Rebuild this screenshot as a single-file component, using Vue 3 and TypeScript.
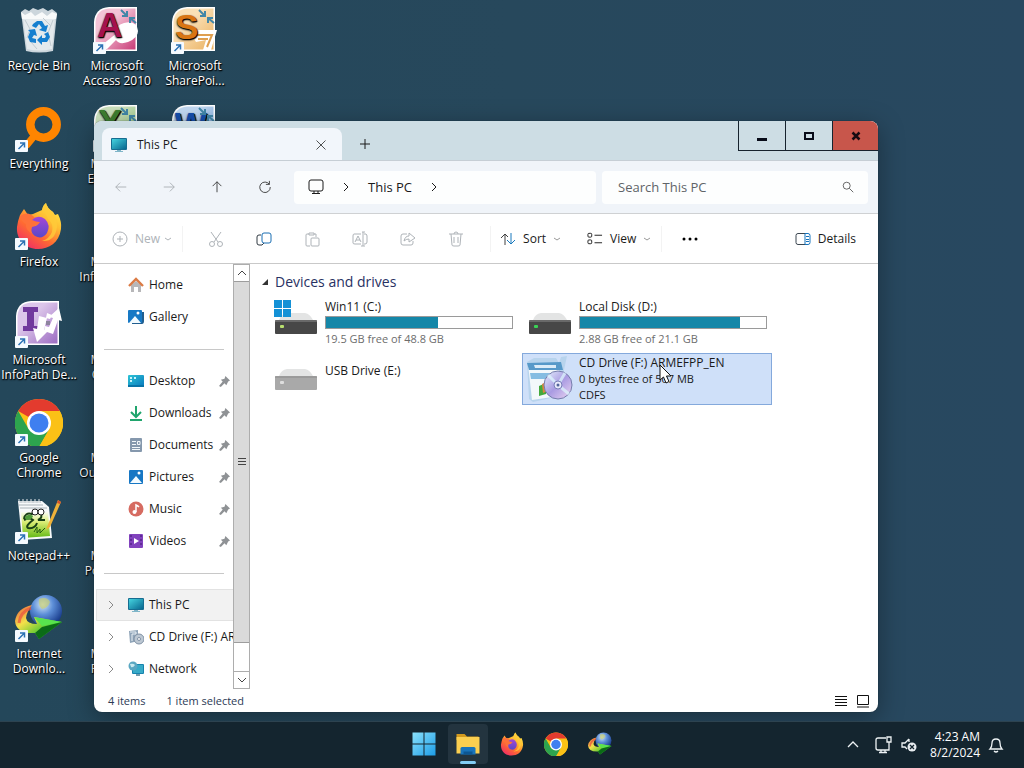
<script setup lang="ts">
import { ref } from 'vue'

interface Shortcut {
  label: string
  art: string
  linked: boolean
}

interface Place {
  label: string
  art: string
  pinned?: boolean
  expandable?: boolean
  current?: boolean
}

interface Drive {
  name: string
  art: string
  lines: string[]
  used?: number
  selected?: boolean
}

const query = ref('')

const office = (light: string, mid: string, edge: string) =>
  `<defs><linearGradient id="o${light.slice(1)}" x1="0" y1="0" x2="1" y2="1"><stop offset=".35" stop-color="${light}"/><stop offset="1" stop-color="${mid}"/></linearGradient></defs><path d="M1 16Q2 2 16 1H44V45H1Z" fill="${edge}"/><path d="M2.500 16Q3.500 3.500 16 2.500H42.500V43.500H2.500Z" fill="url(#o${light.slice(1)})"/>`
const pinch = `<g stroke="#4287a8" stroke-width="2" fill="none"><path d="M28 4L34 10M34 5V10H29M43 17L37 12M37 17V12H42"/></g>`

const monitor = `<defs><linearGradient id="mon" x1="0" y1="0" x2="1" y2="1"><stop offset="0" stop-color="#45d3df"/><stop offset="1" stop-color="#08678f"/></linearGradient></defs><rect x="0" y="1" width="16" height="12" rx="1" fill="#176d91"/><rect x="1" y="2" width="14" height="10" fill="url(#mon)"/><path d="M6 13H10V14H12V15H4V14H6Z" fill="#7fb5c8"/>`

const firefox = `<defs><linearGradient id="ffa" x1=".9" y1="0" x2=".2" y2="1"><stop offset="0" stop-color="#fff04a"/><stop offset=".35" stop-color="#ffbd32"/><stop offset=".65" stop-color="#ff6a32"/><stop offset="1" stop-color="#f02a68"/></linearGradient><linearGradient id="ffb" x1="0" y1="0" x2="0" y2="1"><stop offset="0" stop-color="#a447d6"/><stop offset="1" stop-color="#5948c9"/></linearGradient></defs><path d="M5 13L9 7L13 13L18 12L27 8Q28 3 31 1Q32 6 38 10L40 13L43 12Q47 20 46 27C44 41 34 47 23 47C10 47 1 37 2 25Q3 18 5 13Z" fill="url(#ffa)"/><path d="M5 14Q13 8 20 16L27 18Q25 23 20 23Q18 29 23 34Q10 30 11 22Q7 20 5 14Z" fill="#ff7139"/><path d="M17 18Q23 12 30 17Q36 23 32 31Q27 38 20 34Q15 31 17 25Q23 24 25 20Q21 20 17 18Z" fill="url(#ffb)"/><path d="M27 8Q31 11 33 17Q39 22 37 30Q34 37 27 39Q40 40 42 25Q42 16 38 10Q32 6 31 1Q28 3 27 8Z" fill="#ffca3a" opacity=".8"/>`
const chrome = `<circle cx="24" cy="25" r="24" fill="#fbc116"/><path d="M24 25L3.200 13A24 24 0 0 1 44.800 13Z" fill="#e33b2e"/><path d="M3.200 13A24 24 0 0 0 24 49L34.400 31H24L13.600 31Z" fill="#2da44e"/><path d="M24 13H44.800A24 24 0 0 1 24 49L34.400 31Z" fill="#fbc116"/><circle cx="24" cy="25" r="12" fill="#fff"/><circle cx="24" cy="25" r="9.500" fill="#3f7ff0"/>`
const idm = `<defs><radialGradient id="globe" cx=".4" cy=".3" r=".7"><stop offset="0" stop-color="#d5e7f5"/><stop offset=".45" stop-color="#5d8fd8"/><stop offset="1" stop-color="#173a8a"/></radialGradient><linearGradient id="rain" x1="0" y1="0" x2="1" y2="1"><stop offset="0" stop-color="#e9523c"/><stop offset=".35" stop-color="#f4e04a"/><stop offset=".7" stop-color="#43c62e"/><stop offset="1" stop-color="#128016"/></linearGradient></defs><circle cx="31" cy="17" r="16" fill="url(#globe)"/><path d="M24 5Q32 2 35 8Q33 14 27 15Q23 12 24 5Z" fill="#c9cf73" opacity=".7"/><path d="M17 11Q2 14 0 27Q1 40 20 39L24 45L47 28L19 23L22 30Q12 30 11 24Q12 17 17 11Z" fill="url(#rain)"/><path d="M16 14Q5 18 4 29" stroke="#e8503e" stroke-width="3" fill="none" opacity=".7"/><path d="M19 23L47 28L27 32Z" fill="#58e34e"/><path d="M20 39L27 33L47 28L24 45Z" fill="#0b6b17"/>`

const driveBox = (front: string, light: string) =>
  `<path d="M7 21Q9 15 15 14H33Q38 15 41 21Z" fill="#e3e4e4"/><rect x="3" y="21" width="42" height="14" rx="1" fill="${front}"/><path d="M3 22H45" stroke="#8c8c8c"/><rect x="8" y="26" width="4" height="3" rx="1" fill="${light}"/>`

const art: Record<string, string> = {
  bin: `<path d="M6 6L10 3L14 5L18 2L23 4L28 2L33 5L37 3L42 7L38 45Q24 48 11 45Z" fill="#ccd6dc"/><path d="M8 12H40L37 43Q24 46 12 43Z" fill="#e4eaed"/><path d="M6 6L10 9L16 6L20 10L27 6L32 10L37 6L42 8L41 13H7Z" fill="#f8fafa"/><path d="M10 14L15 23L12 32M38 14L33 27L36 40M16 36L22 43M28 12L36 20" stroke="#c1cbd1" fill="none"/><g fill="#157fcf"><path d="M18 18L22 15H27L30 20L33 19L31 26L24 24L27 22L24 18L21 22L17 20Z"/><path d="M33 26L35 31L32 36H27V39L22 34L27 29V32H30L31 30L29 28Z"/><path d="M13 24L20 23L22 30L19 29L17 32L21 33V37L15 36L13 31L15 26Z"/></g>`,
  access: office('#f4c3d6', '#c93d78', '#fff') + `<path d="M5 42L24 27Q22 19 31 17Q44 14 45 25Q45 32 35 36Q26 39 23 34L14 43Z" fill="#fff"/><text x="4" y="31" font-family="Liberation Sans" font-weight="bold" font-size="35" fill="#a4124e">A</text>` + pinch,
  sharepoint: office('#fae0b6', '#eab160', '#fff') + `<path d="M18 24H46L40 44H32L35 34L25 36Z" fill="#fff"/><path d="M25 29H41L36 41M27 33H37" stroke="#df9f4f" stroke-width="2" fill="none"/><text x="4" y="33" font-family="Liberation Sans" font-weight="bold" font-size="35" fill="#d97513">S</text>` + pinch,
  excel: office('#cce2bd', '#82ba69', '#fff') + `<text x="5" y="32" font-family="Liberation Sans" font-weight="bold" font-size="36" fill="#3f7f31">X</text>` + pinch,
  word: office('#c3daf3', '#5c91d2', '#fff') + `<text x="4" y="32" font-family="Liberation Sans" font-weight="bold" font-size="34" fill="#164fae">W</text>` + pinch,
  infopath: office('#dcc6ea', '#9c6cc2', '#fff') + `<path d="M8 7H23V12H19V26H23V31H8V26H12V12H8Z" fill="#71399d"/><path d="M24 16L32 18L29 30L33 31L22 42L18 28L22 29Z" fill="#fff"/><path d="M44 8L47 21L43 20L38 34L29 31L30 26L34 27L38 18L34 17Z" fill="#fff"/><path d="M32 13L37 15L35 19L31 18Z" fill="#fff"/><rect x="31" y="21" width="4" height="4" fill="#8d849e"/>`,
  everything: `<circle cx="28.500" cy="20.500" r="13.200" fill="none" stroke="#ff8500" stroke-width="8.500"/><path d="M20 31L11 42" stroke="#ff8500" stroke-width="7"/>`,
  firefox,
  chrome,
  idm,
  notepad: `<defs><linearGradient id="npp" x1="0" y1="0" x2="0" y2="1"><stop offset="0" stop-color="#fafcf5"/><stop offset=".4" stop-color="#d8ec72"/><stop offset="1" stop-color="#62b915"/></linearGradient></defs><path d="M3 5H27L34 11L37 42L7 44Z" fill="#f7f9fa"/><path d="M6 16H33L35 40L8 42Z" fill="url(#npp)"/><path d="M4 6H26M4 9H28M5 12H32" stroke="#a9b2b8"/><path d="M4 3V7M8 3V7M12 3V7M16 3V7M20 3V7M24 3V7" stroke="#e6eaec"/><path d="M9 23Q10 16 17 18Q20 12 26 17Q28 22 23 24H30M9 24Q15 21 18 24Q10 30 13 32Q20 33 22 27" fill="none" stroke="#193f16" stroke-width="2"/><path d="M10 21Q14 17 18 20Q17 24 11 24Z" fill="#4f9c3a"/><circle cx="20" cy="16" r="3" fill="#fff" stroke="#222"/><circle cx="26" cy="16" r="3" fill="#fff" stroke="#222"/><path d="M19 36L22 31L22 37L25 33V37L30 32" fill="none" stroke="#245d10"/><path d="M32 31L43 4L46 6L35 31L31 34Z" fill="#eeb23a"/><path d="M43 4L46 6L45 8L42 7Z" fill="#d3542e"/>`,
  none: '',
  monitor,
  home: `<path d="M3 8V15H6V10H10V15H13V8L8 4Z" fill="#b7b7b9"/><path d="M1 9L8 2L15 9" fill="none" stroke="#db7b45" stroke-width="2.400"/>`,
  gallery: `<path d="M4 15H14Q16 15 16 12V3H14V13H4Z" fill="#215e8f"/><rect x="0" y="1" width="14" height="13" rx="1" fill="#1779c5"/><path d="M1 14L7 7L13 14Z" fill="#f3fbff"/><circle cx="10" cy="4" r="1.500" fill="#fff"/>`,
  desktop: `<defs><linearGradient id="desk" x1="0" y1="0" x2="1" y2="1"><stop offset="0" stop-color="#2dc5d6"/><stop offset="1" stop-color="#0877bd"/></linearGradient></defs><rect x="0" y="2" width="16" height="12" rx="1" fill="url(#desk)"/><path d="M2 5H4M2 8H4M6 5H8" stroke="#c9f4fb" stroke-width="2"/><path d="M0 13H16" stroke="#0873a7" stroke-width="2"/>`,
  downloads: `<path d="M8 1V11M3 7L8 12L13 7M2 15H14" fill="none" stroke="#20a56d" stroke-width="2"/>`,
  documents: `<rect x="2" y="1" width="12" height="14" rx="1" fill="#8598ad"/><path d="M4 4.500H8M4 7.500H8M4 10.500H12M4 12.500H12M9.500 4.500H12V7.500H9.500Z" stroke="#f2f7fa" fill="none"/>`,
  pictures: `<rect x="1" y="1" width="14" height="14" rx="1" fill="#1777c4"/><path d="M2 14L8 7L14 14Z" fill="#f4fbff"/><circle cx="11" cy="4" r="1.500" fill="#fff"/>`,
  music: `<circle cx="8" cy="8" r="7.500" fill="#d66b61"/><path d="M8 11V4Q10 5 11 6" stroke="#fff" stroke-width="1.500" fill="none"/><circle cx="6.500" cy="11" r="2" fill="#fff"/>`,
  videos: `<rect x="1" y="1" width="14" height="14" rx="1" fill="#8142bd"/><path d="M3 2V14M13 2V14" stroke="#56268b" stroke-width="1.500" stroke-dasharray="2 2"/><path d="M6 5L11 8L6 11Z" fill="#fff"/>`,
  disc: `<path d="M1 2L10 1V12L2 14Z" fill="#8fa4b8"/><path d="M2 3H8V5H4V12" stroke="#e9f0f5" fill="none"/><circle cx="11" cy="10" r="5" fill="#bcc7d2" stroke="#7f91a5"/><circle cx="11" cy="10" r="1.500" fill="#fff" stroke="#7f91a5"/>`,
  network: `<rect x="4" y="3" width="12" height="10" rx="1" fill="#1683ae"/><rect x="5" y="4" width="10" height="8" fill="#37aac7"/><circle cx="5" cy="5" r="4.500" fill="#5aa7c2"/><path d="M2 3Q5 2 7 4Q5 7 3 6Z" fill="#c8e9ef"/><path d="M8 13H12V15H8Z" fill="#729cad"/>`,
  diskWin: driveBox('#474747', '#b8df6e') + `<g fill="#1491d6"><rect x="2" y="1" width="8" height="8"/><rect x="11" y="1" width="8" height="8"/><rect x="2" y="10" width="8" height="8"/><rect x="11" y="10" width="8" height="8"/></g>`,
  disk: driveBox('#474747', '#39d454'),
  diskUsb: driveBox('#a9a9a9', '#dedede'),
  setup: `<defs><linearGradient id="cd" x1="0" y1="0" x2="1" y2="1"><stop offset="0" stop-color="#e7f4ff"/><stop offset=".5" stop-color="#a99be2"/><stop offset="1" stop-color="#eed8f3"/></linearGradient></defs><path d="M1 7L8 3H30L33 8L35 2L41 1L38 15V40L7 47L3 44Z" fill="#b8d4ed"/><path d="M2 9L6 45L33 41V10Z" fill="#f3f8fb"/><path d="M1 8L35 7L37 15H3Z" fill="#5799c9"/><path d="M8 10H30V13H9Z" fill="#dcecf8"/><path d="M4 18H28L27 24H5Z" fill="#86bde2"/><path d="M13 31L20 28V39L13 41Z" fill="#43a83c"/><path d="M16 29L22 26V36L17 38Z" fill="#dc853e"/><circle cx="32" cy="30" r="14" fill="url(#cd)" stroke="#767eac"/><path d="M32 30L22 20M32 30L43 39M32 30L39 18" stroke="#dffaff" stroke-width="3" opacity=".7"/><circle cx="32" cy="30" r="4" fill="#e9e9fb" stroke="#7780b8"/><circle cx="32" cy="30" r="1.500" fill="#53659b"/>`,
  start: `<defs><linearGradient id="win" x1="0" y1="0" x2="1" y2="1"><stop offset="0" stop-color="#8be1fb"/><stop offset="1" stop-color="#1c9ce6"/></linearGradient></defs><path d="M1 1H23V23H1ZM25 1H47V23H25ZM1 25H23V47H1ZM25 25H47V47H25Z" fill="url(#win)"/>`,
  folder: `<path d="M1 4H17L22 9H45V16H1Z" fill="#d39a1e"/><path d="M1 10H47V43H1Z" fill="#fbcf50"/><path d="M9 45V33Q9 30 12 30H36Q39 30 39 33V45Z" fill="#1974bb"/><path d="M15 39H33V45H15Z" fill="#0d5692"/>`,
}

const glyph: Record<string, string> = {
  back: `<path d="M14 8H2M7 3L2 8L7 13"/>`,
  forward: `<path d="M2 8H14M9 3L14 8L9 13"/>`,
  up: `<path d="M8 14V2M3 7L8 2L13 7"/>`,
  refresh: `<path d="M13 5A6 6 0 1 0 14 8M13 1V5H9"/>`,
  pc: `<rect x="1" y="1" width="14" height="11" rx="2"/><path d="M4 14.500H12M6 12V14M10 12V14"/>`,
  search: `<circle cx="6.500" cy="6.500" r="4"/><path d="M9.500 9.500L14 14"/>`,
  plus: `<path d="M8 3V13M3 8H13"/>`,
  add: `<circle cx="8" cy="8" r="7"/><path d="M8 5V11M5 8H11"/>`,
  close: `<path d="M2 2L14 14M14 2L2 14"/>`,
  cut: `<path d="M3 1L10 11M13 1L6 11"/><circle cx="4" cy="13" r="2.500"/><circle cx="12" cy="13" r="2.500"/>`,
  copy: `<path d="M5 4H3Q1 4 1 6V12Q1 14 3 14H6L8 12" stroke="#303a42"/><rect x="6" y="2" width="9" height="10" rx="2" stroke="#1b6fb3"/>`,
  paste: `<path d="M6 15H3Q2 15 2 14V4Q2 3 3 3H5M10 3H12V6M5 2H10V4H5Z"/><rect x="7" y="7" width="8" height="8" rx="1"/>`,
  rename: `<path d="M9 3H2Q1 3 1 5V12Q1 13 3 13H9M12 3H14Q15 4 15 5V11Q15 13 13 13H12M10 1H13M11 1V15M9 15H13M3 11L6 5L9 11M4 9H8"/>`,
  share: `<path d="M7 3H3Q1 3 1 5V12Q1 14 3 14H11Q13 14 13 12V10M9 2L15 7L9 11V8Q6 8 4 10Q5 5 9 5Z"/>`,
  trash: `<path d="M1 3H15M6 3Q6 1 8 1Q10 1 10 3M3 3L4 14Q4 15 6 15H10Q12 15 12 14L13 3M6 6V12M10 6V12"/>`,
  sort: `<path d="M5 14V3M1 7L5 3L8 6" stroke="#404040"/><path d="M11 2V13M7 9L11 13L15 9" stroke="#1879bd"/>`,
  view: `<rect x="1" y="2" width="4" height="4" rx="1"/><rect x="1" y="9" width="4" height="4" rx="1"/><path d="M8 4H16M8 12H16"/>`,
  details: `<path d="M10 2H3Q1 2 1 4V11Q1 13 3 13H10" stroke="#3b4650"/><path d="M10 2H13Q15 2 15 4V11Q15 13 13 13H10ZM11 5H14M11 8H14M11 10H14" stroke="#1774bd"/>`,
}

const shortcuts: Shortcut[] = [
  { label: 'Recycle Bin', art: 'bin', linked: false },
  { label: 'Everything', art: 'everything', linked: true },
  { label: 'Firefox', art: 'firefox', linked: true },
  { label: 'Microsoft InfoPath De...', art: 'infopath', linked: true },
  { label: 'Google Chrome', art: 'chrome', linked: true },
  { label: 'Notepad++', art: 'notepad', linked: true },
  { label: 'Internet Downlo...', art: 'idm', linked: true },
  { label: 'Microsoft Access 2010', art: 'access', linked: true },
  { label: 'Microsoft Excel 2010', art: 'excel', linked: true },
  { label: 'Microsoft InfoPath Fill...', art: 'none', linked: false },
  { label: 'Microsoft OneNote', art: 'none', linked: false },
  { label: 'Microsoft Outlook 2010', art: 'none', linked: false },
  { label: 'Microsoft PowerPoint', art: 'none', linked: false },
  { label: 'Microsoft Publisher', art: 'none', linked: false },
  { label: 'Microsoft SharePoi...', art: 'sharepoint', linked: true },
  { label: 'Microsoft Word 2010', art: 'word', linked: true },
]

const groups: Place[][] = [
  [
    { label: 'Home', art: 'home' },
    { label: 'Gallery', art: 'gallery' },
  ],
  [
    { label: 'Desktop', art: 'desktop', pinned: true },
    { label: 'Downloads', art: 'downloads', pinned: true },
    { label: 'Documents', art: 'documents', pinned: true },
    { label: 'Pictures', art: 'pictures', pinned: true },
    { label: 'Music', art: 'music', pinned: true },
    { label: 'Videos', art: 'videos', pinned: true },
  ],
  [
    { label: 'This PC', art: 'monitor', expandable: true, current: true },
    { label: 'CD Drive (F:) ARMEFPP_EN', art: 'disc', expandable: true },
    { label: 'Network', art: 'network', expandable: true },
  ],
]

const drives: Drive[] = [
  { name: 'Win11 (C:)', art: 'diskWin', used: 60, lines: ['19.5 GB free of 48.8 GB'] },
  { name: 'Local Disk (D:)', art: 'disk', used: 86, lines: ['2.88 GB free of 21.1 GB'] },
  { name: 'USB Drive (E:)', art: 'diskUsb', lines: [''] },
  { name: 'CD Drive (F:) ARMEFPP_EN', art: 'setup', lines: ['0 bytes free of 507 MB', 'CDFS'], selected: true },
]

const navButtons = [
  { icon: 'back', label: 'Back', off: true },
  { icon: 'forward', label: 'Forward', off: true },
  { icon: 'up', label: 'Up', off: false },
  { icon: 'refresh', label: 'Refresh', off: false },
]

const tools = [
  { icon: 'cut', label: 'Cut', off: true },
  { icon: 'copy', label: 'Copy', off: false },
  { icon: 'paste', label: 'Paste', off: true },
  { icon: 'rename', label: 'Rename', off: true },
  { icon: 'share', label: 'Share', off: true },
  { icon: 'trash', label: 'Delete', off: true },
]

const taskApps = [
  { icon: 'start', label: 'Start', active: false },
  { icon: 'folder', label: 'File Explorer', active: true },
  { icon: 'firefox', label: 'Firefox', active: false },
  { icon: 'chrome', label: 'Google Chrome', active: false },
  { icon: 'idm', label: 'Internet Download Manager', active: false },
]
</script>

<template>
  <div class="screen">
    <main class="desktop">
      <div class="shortcuts">
        <button v-for="s in shortcuts" :key="s.label" class="shortcut" type="button">
          <svg viewBox="0 0 48 48" aria-hidden="true">
            <g v-html="art[s.art]"></g>
            <g v-if="s.linked">
              <rect x="0" y="36" width="13" height="12" rx="1" fill="#f5faff" />
              <path d="M3.500 45L9 39.500M5 39H9.500V43.500" fill="none" stroke="#2c72b4" stroke-width="1.500" />
            </g>
          </svg>
          <span>{{ s.label }}</span>
        </button>
      </div>

      <section class="window" aria-label="This PC">
        <header class="titlebar">
          <div class="tab">
            <svg class="i16" viewBox="0 0 16 16" aria-hidden="true" v-html="art.monitor"></svg>
            <span>This PC</span>
            <button type="button" aria-label="Close tab"><svg class="i12 line" viewBox="0 0 16 16" v-html="glyph.close"></svg></button>
          </div>
          <button class="newtab" type="button" aria-label="New tab"><svg class="i16 line" viewBox="0 0 16 16" v-html="glyph.plus"></svg></button>
          <div class="captions">
            <button type="button" aria-label="Minimize"><svg viewBox="0 0 12 12"><path d="M1 8H11V11H1Z" fill="#080b18" /></svg></button>
            <button type="button" aria-label="Maximize"><svg viewBox="0 0 12 12"><path d="M2 3H10V9H2Z" fill="none" stroke="#080b18" stroke-width="2" /></svg></button>
            <button class="quit" type="button" aria-label="Close"><svg viewBox="0 0 12 12"><path d="M2.500 2.500L9.500 9.500M9.500 2.500L2.500 9.500" stroke="#180b12" stroke-width="2.500" /></svg></button>
          </div>
        </header>

        <nav class="navbar" aria-label="Location">
          <div class="navbuttons">
            <button v-for="b in navButtons" :key="b.icon" type="button" :aria-label="b.label" :disabled="b.off">
              <svg class="i14 line" viewBox="0 0 16 16" v-html="glyph[b.icon]"></svg>
            </button>
          </div>
          <div class="address">
            <svg class="i16 line" viewBox="0 0 16 16" aria-hidden="true" v-html="glyph.pc"></svg>
            <svg class="i8 line" viewBox="0 0 8 8" aria-hidden="true"><path d="M2 0L6 4L2 8" /></svg>
            <button type="button">This PC</button>
            <svg class="i8 line" viewBox="0 0 8 8" aria-hidden="true"><path d="M2 0L6 4L2 8" /></svg>
          </div>
          <div class="search">
            <input v-model="query" type="text" placeholder="Search This PC" aria-label="Search This PC" />
            <svg class="i14 line" viewBox="0 0 16 16" aria-hidden="true" v-html="glyph.search"></svg>
          </div>
        </nav>

        <div class="toolbar" role="toolbar" aria-label="Commands">
          <button class="new" type="button" disabled>
            <svg class="i16 line" viewBox="0 0 16 16" v-html="glyph.add"></svg>New
            <svg class="i8 line" viewBox="0 0 8 8"><path d="M1 3L4 5L7 3" /></svg>
          </button>
          <i class="rule"></i>
          <div class="tools">
            <button v-for="t in tools" :key="t.icon" type="button" :aria-label="t.label" :disabled="t.off" :class="t.icon">
              <svg class="i16 line" viewBox="0 0 16 16" v-html="glyph[t.icon]"></svg>
            </button>
          </div>
          <i class="rule"></i>
          <button class="sort" type="button">
            <svg class="i16 line" viewBox="0 0 16 16" v-html="glyph.sort"></svg>Sort
            <svg class="i8 line faint" viewBox="0 0 8 8"><path d="M1 3L4 5L7 3" /></svg>
          </button>
          <button class="view" type="button">
            <svg class="i16 line" viewBox="0 0 17 16" v-html="glyph.view"></svg>View
            <svg class="i8 line faint" viewBox="0 0 8 8"><path d="M1 3L4 5L7 3" /></svg>
          </button>
          <i class="rule"></i>
          <button class="more" type="button" aria-label="More options">
            <svg class="i16" viewBox="0 0 16 16"><circle cx="2" cy="8" r="1.500" /><circle cx="8" cy="8" r="1.500" /><circle cx="14" cy="8" r="1.500" /></svg>
          </button>
          <button class="details" type="button">
            <svg class="i16 line" viewBox="0 0 16 15" v-html="glyph.details"></svg>Details
          </button>
        </div>

        <div class="body">
          <aside class="places">
            <div v-for="(group, g) in groups" :key="g" class="group">
              <button v-for="p in group" :key="p.label" type="button" class="place" :class="{ current: p.current }">
                <svg class="i8 line twist" viewBox="0 0 8 8"><path v-if="p.expandable" d="M2 0L6 4L2 8" /></svg>
                <svg class="i16" viewBox="0 0 16 16" v-html="art[p.art]"></svg>
                <span>{{ p.label }}</span>
                <svg v-if="p.pinned" class="pin" viewBox="0 0 12 12"><path d="M7 0L12 5L10 6L8 10L6 8L2 12L0 11L4 6L2 4L6 3Z" fill="#8f9295" /></svg>
              </button>
            </div>
          </aside>
          <div class="scrollbar" aria-hidden="true">
            <div class="arrow"><svg class="i8 line" viewBox="0 0 8 8"><path d="M0 6L4 2L8 6" /></svg></div>
            <div class="thumb"><svg class="i8 line" viewBox="0 0 8 8"><path d="M0 .5H8M0 3.500H8M0 6.500H8" /></svg></div>
            <div class="arrow"><svg class="i8 line" viewBox="0 0 8 8"><path d="M0 2L4 6L8 2" /></svg></div>
          </div>
          <div class="content">
            <h2><svg class="i8" viewBox="0 0 8 8"><path d="M7 1V7H1Z" fill="#333" /></svg>Devices and drives</h2>
            <div class="drives">
              <button v-for="d in drives" :key="d.name" type="button" class="drive" :class="{ selected: d.selected }">
                <svg viewBox="0 0 48 48" aria-hidden="true" v-html="art[d.art]"></svg>
                <span class="info">
                  <span>{{ d.name }}</span>
                  <span v-if="d.used" class="meter"><span :style="{ width: d.used + '%' }"></span></span>
                  <span v-for="l in d.lines" :key="l" class="sub">{{ l }}</span>
                </span>
              </button>
            </div>
          </div>
        </div>

        <footer class="status">
          <span>4 items</span>
          <span>1 item selected</span>
          <div class="modes">
            <button type="button" aria-label="Details view"><svg viewBox="0 0 14 14"><path d="M1 2.500H13M1 5.500H13M1 8.500H13M1 11.500H13" stroke="#111" /></svg></button>
            <button type="button" aria-label="Large icons view"><svg viewBox="0 0 14 14"><path d="M2 1.500H12.500V10.500H1.500V1.500ZM1 13H13" stroke="#111" fill="none" /></svg></button>
          </div>
        </footer>
      </section>
    </main>

    <footer class="taskbar">
      <div class="apps">
        <button v-for="a in taskApps" :key="a.label" type="button" :aria-label="a.label" :class="{ active: a.active }">
          <svg viewBox="0 0 48 48" v-html="art[a.icon]"></svg>
        </button>
      </div>
      <div class="tray">
        <button type="button" aria-label="Show hidden icons"><svg class="i12" viewBox="0 0 12 12"><path d="M1 8L6 3L11 8" /></svg></button>
        <button class="net" type="button" aria-label="Network and volume">
          <svg class="i18" viewBox="0 0 18 18"><path d="M11 2H3Q1 2 1 4V12Q1 14 3 14H14V8M4 16.500H12M6 14V16M10 14V16M12 1H16V6H12ZM14 6V14" /></svg>
          <svg class="i18" viewBox="0 0 18 18"><path d="M8 3L4 7H1V11H4L6 13M8 3V6" /><circle cx="11" cy="11" r="4.500" fill="#e9eef1" /><path d="M9 9L13 13M13 9L9 13" class="dark" /></svg>
        </button>
        <button class="clock" type="button"><span>4:23 AM</span><span>8/2/2024</span></button>
        <button type="button" aria-label="Notifications"><svg class="i16" viewBox="0 0 16 16"><path d="M2 12Q4 10 4 6Q4 2 8 2Q12 2 12 6Q12 10 14 12ZM6 14Q8 16 10 14" /></svg></button>
      </div>
    </footer>

    <svg class="pointer" viewBox="0 0 13 20" aria-hidden="true"><path d="M1 1V16L4.500 13L7 19L10 17.500L7.500 12H12Z" fill="#fff" stroke="#111" /></svg>
  </div>
</template>

<style>
html,
body {
  margin: 0;
  overflow: hidden;
}
</style>

<style scoped>
.screen {
  position: relative;
  display: flex;
  flex-direction: column;
  height: 100vh;
  background: linear-gradient(90deg, #24475a, #27485c 50%, #284860);
  font-family: "Open Sans", "Noto Sans", sans-serif;
  font-size: 12px;
  line-height: 16px;
  color: #1a1a1a;
}

button {
  display: flex;
  align-items: center;
  justify-content: center;
  padding: 0;
  border: 0;
  background: none;
  color: inherit;
  font: inherit;
}

svg {
  display: block;
  flex: none;
}

.line {
  fill: none;
  stroke: currentColor;
  overflow: visible;
}

.i8 { width: 8px; height: 8px; }
.i12 { width: 12px; height: 12px; }
.i14 { width: 14px; height: 14px; }
.i16 { width: 16px; height: 16px; }
.i18 { width: 18px; height: 18px; }

.desktop {
  position: relative;
  flex: 1;
  min-height: 0;
}

.shortcuts {
  display: grid;
  grid-template-rows: repeat(7, 98px);
  grid-auto-flow: column;
  grid-auto-columns: 78px;
}

.shortcut {
  flex-direction: column;
  justify-content: flex-start;
  gap: 4px;
  padding-top: 6px;
  color: #fff;
  line-height: 15px;
  text-shadow: 0 1px 2px #000, 1px 1px 1px #000;
}

.shortcut svg {
  width: 48px;
  height: 48px;
}

.window {
  position: absolute;
  inset: 121px 146px 9px 94px;
  display: flex;
  flex-direction: column;
  overflow: hidden;
  border-radius: 8px;
  background: #fff;
  box-shadow: 0 0 1px #12232e, 0 6px 26px rgba(0, 0, 0, 0.35);
}

.titlebar {
  display: flex;
  align-items: flex-end;
  height: 39px;
  flex: none;
  border-bottom: 1px solid #c6ced5;
  background: #cddde4;
}

.tab {
  display: flex;
  align-items: center;
  gap: 10px;
  width: 240px;
  height: 32px;
  box-sizing: border-box;
  margin-left: 8px;
  padding: 1px 15px 0 9px;
  border-radius: 8px 8px 0 0;
  background: #f2f6fb;
}

.tab button {
  margin-left: auto;
}

.newtab {
  width: 46px;
  height: 32px;
}

.captions {
  display: flex;
  align-self: flex-start;
  margin-left: auto;
}

.captions button {
  width: 47px;
  height: 30px;
  box-sizing: border-box;
  border: solid #17232e;
  border-width: 0 0 1px 1px;
}

.captions svg {
  width: 12px;
  height: 12px;
}

.captions .quit {
  width: 46px;
  background: #c8564b;
}

.navbar {
  display: flex;
  align-items: center;
  height: 52px;
  flex: none;
  padding-right: 10px;
  border-bottom: 1px solid #cfd1d3;
  background: #f0f4f9;
}

.navbuttons {
  display: flex;
  width: 200px;
  padding-left: 3px;
  box-sizing: border-box;
  color: #333;
}

.navbuttons button {
  width: 48px;
  height: 32px;
}

.navbuttons button:disabled {
  color: #a7abb0;
}

.address,
.search {
  display: flex;
  align-items: center;
  height: 33px;
  box-sizing: border-box;
  border-radius: 4px;
  background: #fdfefe;
  font-size: 13px;
}

.address {
  flex: 288;
  gap: 18px;
  padding-left: 14px;
}

.search {
  flex: 237;
  min-width: 0;
  margin-left: 6px;
  padding: 0 13px 0 16px;
  color: #555;
}

.search input {
  flex: 1;
  min-width: 0;
  padding: 0;
  border: 0;
  outline: 0;
  background: none;
  color: #222;
  font: inherit;
}

.search input::placeholder {
  color: #606468;
  opacity: 1;
}

.toolbar {
  display: flex;
  align-items: center;
  height: 50px;
  flex: none;
  padding: 0 22px 0 18px;
  border-bottom: 1px solid #c9c9c9;
  box-sizing: border-box;
}

.toolbar button {
  height: 32px;
  gap: 7px;
}

.toolbar button:disabled {
  color: #aeb3b8;
}

.new svg:last-child {
  margin-left: -3px;
}

.rule {
  width: 1px;
  height: 26px;
  margin: 0 9px 0 10px;
  background: #f3f3f3;
}

.tools {
  display: flex;
}

.tools button {
  width: 48px;
}

.faint {
  color: #999;
}

.view {
  margin-left: 26px;
}

.more {
  margin-left: 11px;
}

.toolbar .details {
  margin-left: auto;
}

.body {
  display: flex;
  flex: 1;
  min-height: 0;
}

.places {
  width: 137px;
  box-sizing: border-box;
  margin-left: 2px;
  padding-top: 5px;
  overflow: hidden;
}

.group + .group::before {
  content: "";
  display: block;
  height: 1px;
  margin: 16px 9px 15px 8px;
  background: #c8c8c8;
}

.place {
  width: 100%;
  height: 32px;
  box-sizing: border-box;
  justify-content: flex-start;
  border: 1px solid transparent;
  padding: 0 2px 0 10px;
  text-align: left;
  white-space: nowrap;
}

.place.current {
  border-color: #e2e2e2;
  border-right: 0;
  background: #f2f2f2;
}

.twist {
  margin-right: 13px;
  color: #8a8a8a;
}

.place span {
  margin-left: 5px;
}

.pin {
  width: 11px;
  height: 11px;
  margin-left: auto;
}

.scrollbar {
  display: flex;
  flex-direction: column;
  width: 17px;
  box-sizing: border-box;
  border: 1px solid #adadad;
  color: #444;
}

.arrow,
.thumb {
  display: flex;
  align-items: center;
  justify-content: center;
}

.arrow {
  height: 16px;
  flex: none;
}

.arrow:last-child {
  margin-top: auto;
  border-top: 1px solid #adadad;
}

.thumb {
  flex: 0 0 85%;
  border: solid #9d9d9d;
  border-width: 1px 0;
  background: #dadada;
}

.content {
  flex: 1;
  min-width: 0;
  padding: 8px 14px 0 11px;
}

h2 {
  display: flex;
  align-items: center;
  gap: 6px;
  margin: 0 0 5px;
  color: #283163;
  font-size: 14px;
  font-weight: 400;
  line-height: 20px;
}

.drives {
  display: grid;
  grid-template-columns: repeat(auto-fill, 250px);
  gap: 4px;
  margin-left: 7px;
}

.drive {
  height: 52px;
  box-sizing: border-box;
  justify-content: flex-start;
  gap: 5px;
  padding: 0 4px 0 3px;
  border: 1px solid transparent;
  text-align: left;
}

.drive > svg {
  width: 48px;
  height: 48px;
}

.drive.selected {
  border-color: #84a9dc;
  background: #cfe0f9;
}

.info {
  display: flex;
  flex: 1;
  flex-direction: column;
}

.info > span {
  min-height: 16px;
}

.info .sub {
  color: #6d6d6d;
  font-size: 11px;
}

.selected .info .sub {
  color: #1a1a1a;
}

.info .meter {
  height: 13px;
  min-height: 0;
  box-sizing: border-box;
  margin: 1px 0 2px;
  border: 1px solid #9a9a9a;
  background: #fff;
}

.meter span {
  display: block;
  height: 100%;
  background: #1587a8;
}

.status {
  display: flex;
  align-items: center;
  gap: 21px;
  height: 23px;
  flex: none;
  padding: 0 8px 0 14px;
  color: #2c3a55;
  font-size: 11px;
}

.modes {
  display: flex;
  gap: 8px;
  margin-left: auto;
}

.modes svg {
  width: 14px;
  height: 14px;
}

.taskbar {
  position: relative;
  display: flex;
  justify-content: center;
  height: 47px;
  flex: none;
  box-sizing: border-box;
  border-top: 1px solid #2d4350;
  background: #14252f;
}

.apps {
  display: flex;
  align-items: center;
  gap: 4px;
  padding-bottom: 2px;
}

.apps button {
  position: relative;
  width: 40px;
  height: 40px;
  border-radius: 4px;
}

.apps .active {
  background: #23343f;
}

.apps .active::after {
  content: "";
  position: absolute;
  bottom: 0;
  width: 16px;
  height: 3px;
  border-radius: 2px;
  background: #82cdf5;
}

.apps svg {
  width: 24px;
  height: 24px;
}

.tray {
  position: absolute;
  inset: 0 20px 0 auto;
  display: flex;
  align-items: center;
  gap: 8px;
  color: #fff;
}

.tray path {
  fill: none;
  stroke: #eef3f5;
  stroke-width: 1.3;
}

.tray .dark {
  stroke: #14252f;
}

.net {
  gap: 8px;
  margin-left: 8px;
}

.clock {
  flex-direction: column;
  align-items: flex-end;
  margin-left: 3px;
}

.pointer {
  position: absolute;
  left: 659px;
  top: 364px;
  width: 13px;
  height: 20px;
}
</style>
